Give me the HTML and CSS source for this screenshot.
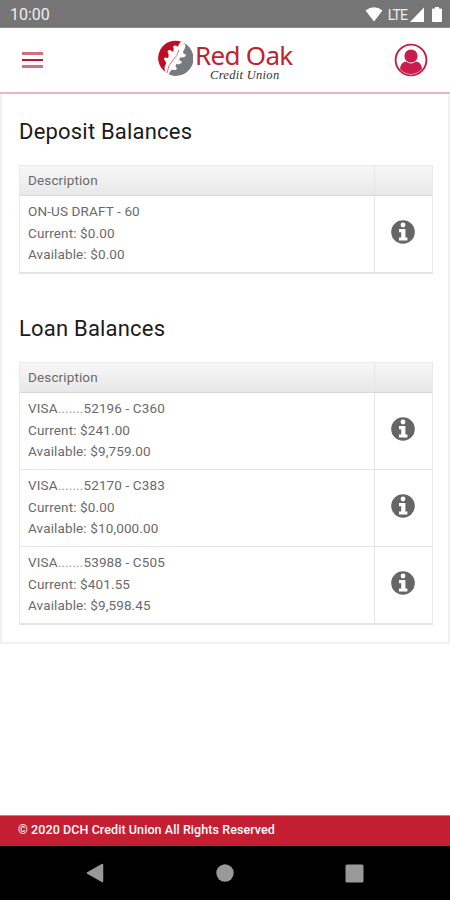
FILE: index.html
```html
<!DOCTYPE html>
<html lang="en">
<head>
<meta charset="utf-8">
<title>Red Oak Credit Union</title>
<link rel="stylesheet" href="styles.css">
</head>
<body>
<svg class="defs" width="0" height="0" aria-hidden="true">
  <symbol id="info" viewBox="0 0 24 24">
    <circle cx="12" cy="12" r="11.8" fill="#666"/>
    <circle cx="12" cy="5" r="2.400" fill="#fff"/>
    <path d="M8 9h6.400v8.400h2v3.200H8v-3.200h2.200v-5.200H8z" fill="#fff"/>
  </symbol>
</svg>
<div class="screen">
  <div class="status">
    <span class="time">10:00</span>
    <svg class="wifi" width="18" height="15" viewBox="0 0 18 15"><path d="M.5 3.500Q9-3 17.500 3.500L9 14.500z" fill="#fff"/></svg>
    <span class="lte">LTE</span>
    <svg class="signal" width="14" height="15" viewBox="0 0 14 15"><path d="M14 .5V15H0z" fill="#fff"/></svg>
    <svg class="battery" width="10" height="15" viewBox="0 0 10 15"><path d="M3 0h4v1.500h2q1 0 1 1V14q0 1-1 1H1q-1 0-1-1V2.500q0-1 1-1h2z" fill="#fff"/></svg>
  </div>
  <header class="header">
    <div class="menu"><i></i><i></i><i></i></div>
    <div class="logo">
      <svg width="36" height="36" viewBox="0 0 36 36">
        <path d="M25 2A17.300 17.300 0 0 0 9 32.500Q10 18 25 2z" fill="#bf0d22"/>
        <path d="M27 3A17.300 17.300 0 0 1 11 34Q22 24 27 3z" fill="#777b7e"/>
        <path d="M26 1Q21.500 2.500 21 7Q18 4.500 16 6.500Q17.500 9 16 12Q12 8.500 10.500 11.500Q12.500 15 11 18Q6.500 16.500 7 19.500Q10 22 8.500 25Q6.500 27 8.500 33L12 34.500Q12 31 15 29.500Q19 31 20 28.500Q17.500 26 19.500 24Q24 25 25 21.500Q21 20.500 23 17.500Q29 18 29 14.500Q25 14 26.500 10.500Q29 8 28 3.500L25 6z" fill="#fff"/>
        <path d="M22 10Q20.500 16 16 20Q11 25 10 33" fill="none" stroke="#cc7378" stroke-width="1"/>
      </svg>
      <div class="wordmark">
        <span class="name">Red Oak</span>
        <span class="sub">Credit Union</span>
      </div>
    </div>
    <svg class="user" width="34" height="34" viewBox="0 0 34 34">
      <circle cx="17" cy="17" r="15.400" fill="#fff" stroke="#c4203c" stroke-width="1.900"/>
      <circle cx="17" cy="13" r="6.600" fill="#c81d4e"/>
      <path d="M6 26Q6.500 19 12 18.500Q17 22.500 22 18.500Q27.500 19 28 26Q23.500 31 17 31T6 26z" fill="#c81d4e"/>
    </svg>
  </header>
  <main class="panel">
    <h2>Deposit Balances</h2>
    <div class="table">
      <div class="row head"><div class="desc">Description</div><div class="action"></div></div>
      <div class="row"><div class="desc">ON-US DRAFT - 60<br>Current: $0.00<br>Available: $0.00</div><div class="action"><svg width="24" height="24"><use href="#info"/></svg></div></div>
    </div>
    <h2>Loan Balances</h2>
    <div class="table">
      <div class="row head"><div class="desc">Description</div><div class="action"></div></div>
      <div class="row"><div class="desc">VISA<span class="dots">.......</span>52196 - C360<br>Current: $241.00<br>Available: $9,759.00</div><div class="action"><svg width="24" height="24"><use href="#info"/></svg></div></div>
      <div class="row"><div class="desc">VISA<span class="dots">.......</span>52170 - C383<br>Current: $0.00<br>Available: $10,000.00</div><div class="action"><svg width="24" height="24"><use href="#info"/></svg></div></div>
      <div class="row"><div class="desc">VISA<span class="dots">.......</span>53988 - C505<br>Current: $401.55<br>Available: $9,598.45</div><div class="action"><svg width="24" height="24"><use href="#info"/></svg></div></div>
    </div>
  </main>
  <footer class="footer">© 2020 DCH Credit Union All Rights Reserved</footer>
  <nav class="nav">
    <svg width="18" height="20" viewBox="0 0 18 20"><path d="M16.500 1.500v17L1.500 10z" fill="#999" stroke="#999" stroke-width="1.500" stroke-linejoin="round"/></svg>
    <svg width="18" height="18" viewBox="0 0 18 18"><circle cx="9" cy="9" r="8.700" fill="#999"/></svg>
    <svg width="19" height="19" viewBox="0 0 19 19"><rect x=".5" y=".5" width="18" height="18" rx="1.500" fill="#999"/></svg>
  </nav>
</div>
</body>
</html>
```
FILE: styles.css
```css
* { box-sizing: border-box; }
body { margin: 0; background: #fff; font-family: Roboto, sans-serif; }
.defs { display: block; }
.screen { width: 450px; height: 900px; display: flex; flex-direction: column; overflow: hidden; }
.status { height: 28px; flex: none; background: #757575; color: #fff; display: flex; align-items: center; padding: 2px 8px 0 10px; border-bottom: 1px solid #8b8b8b; }
.time { font-size: 16px; margin-right: auto; color: #eee; }
.lte { font-size: 14px; letter-spacing: -0.9px; margin: 0 3px 0 5px; color: #eee; }
.battery { margin-left: 8px; }
.header { height: 66px; flex: none; display: flex; justify-content: space-between; align-items: flex-start; border-bottom: 2px solid #edb5c0; padding: 0 22px; }
.menu { display: flex; flex-direction: column; gap: 4px; margin-top: 24px; width: 21px; }
.menu i { height: 2px; background: #c3132d; }
.menu i:first-child, .menu i:last-child { height: 3px; background: #d2707d; }
.logo { display: flex; margin: 12px 0 0 14px; }
.wordmark { display: flex; flex-direction: column; width: 101px; padding-left: 2px; }
.name { font: 26px/31px "Noto Sans", sans-serif; color: #bd2432; letter-spacing: -.7px; white-space: nowrap; }
.sub { font: italic 12.5px/12px "Liberation Serif", serif; color: #333; margin: -2px 0 0 15px; white-space: nowrap; letter-spacing: .3px; }
.user { margin-top: 15px; }
.panel { height: 550px; flex: none; border: 2px solid #f1f1f1; border-top: 0; padding: 24px 15px 0 17px; }
h2 { margin: 0; font-weight: 400; font-size: 22px; line-height: 28px; letter-spacing: .2px; color: #1b1b1b; }
.table { margin-top: 19px; border: 1px solid #e9e9e9; border-bottom: 2px solid #e4e4e4; font-size: 13.5px; line-height: 21.6px; color: #6a6a6a; }
.row { display: flex; height: 77px; border-bottom: 1px solid #e6e6e6; }
.row:last-child { border-bottom: 0; height: 76px; }
.head { height: 30px; background: linear-gradient(#f7f7f7, #e8e8e8); border-color: #d8d8d8; }
.desc { flex: 1; padding: 5px 8px 0; letter-spacing: .13px; }
.head .desc { padding-top: 4px; }
.action { width: 58px; border-left: 1px solid #e5e5e5; display: flex; align-items: center; justify-content: center; padding: 0 2px 4px 0; }
.table + h2 { margin-top: 41px; }
.dots { color: #999; }
.footer { height: 31px; flex: none; margin-top: auto; background: #c41e32; border-top: 1px solid #d77782; color: #fff; font-size: 12.5px; font-weight: 500; letter-spacing: .08px; line-height: 28px; padding-left: 18px; }
.nav { height: 54px; flex: none; background: #000; display: flex; justify-content: space-between; align-items: center; padding: 0 86px; }
```
